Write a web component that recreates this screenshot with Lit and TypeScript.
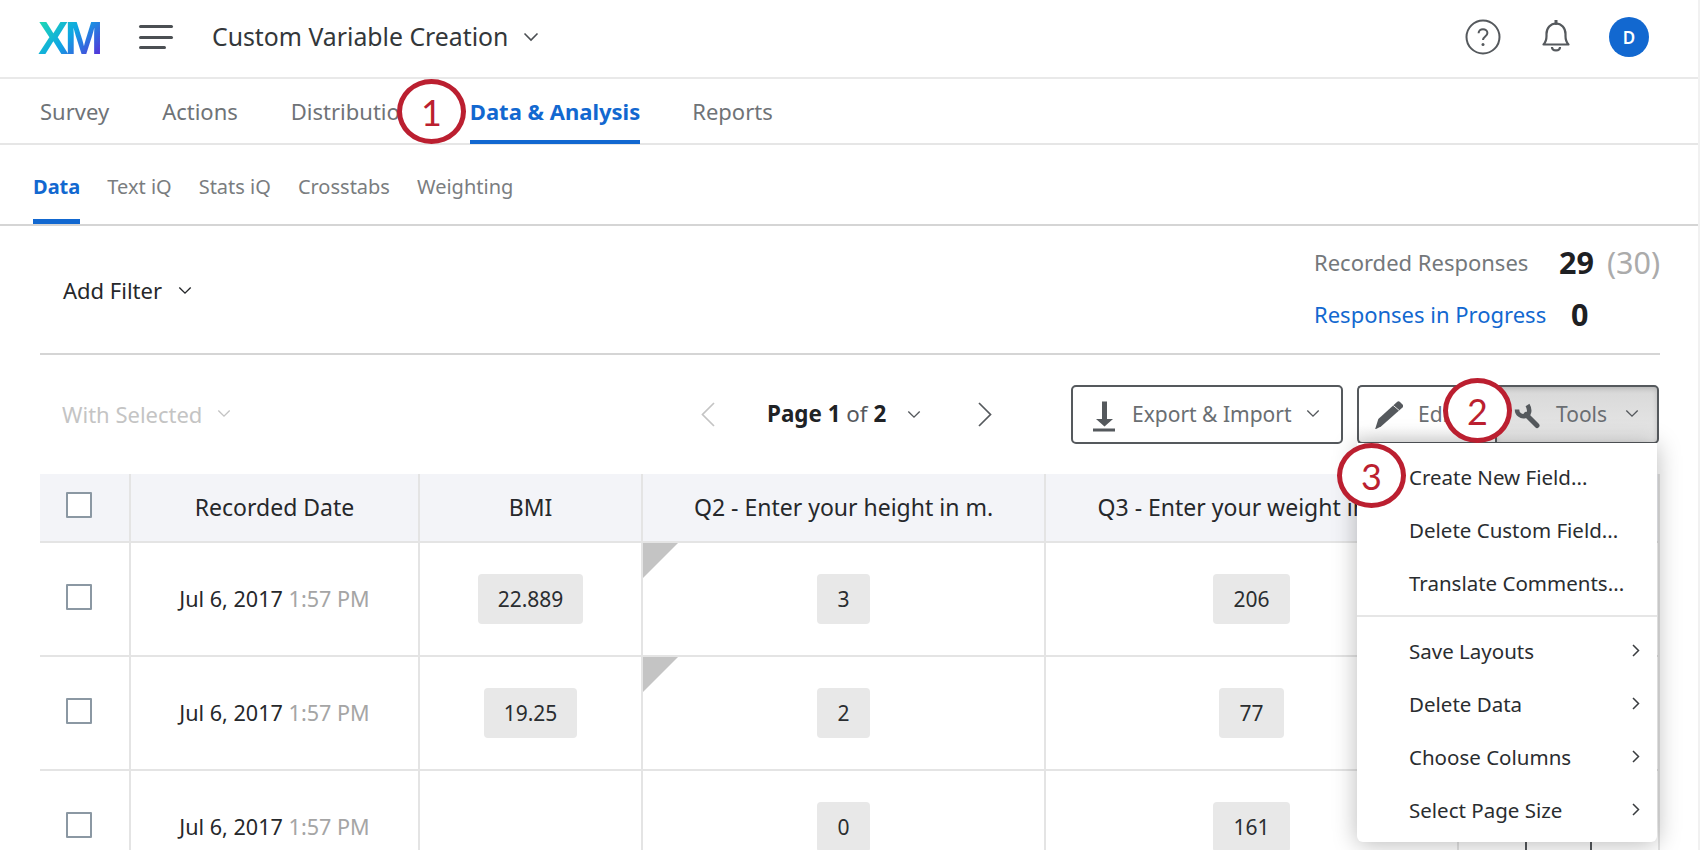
import { LitElement, html, css } from "lit";
import { customElement } from "lit/decorators.js";

const chev = (cls = "chev") => html`<svg class=${cls} viewBox="0 0 16 10"><path d="M1.5 1.5 8 8l6.500-6.500" fill="none" stroke="currentColor" stroke-width="1.600"/></svg>`;

const rows = [
  { time: "1:57 PM", bmi: "22.889", q2: "3", q3: "206", flag: true, last: false },
  { time: "1:57 PM", bmi: "19.25", q2: "2", q3: "77", flag: true, last: false },
  { time: "1:57 PM", bmi: "", q2: "0", q3: "161", flag: false, last: true },
];

const menuTop = ["Create New Field...", "Delete Custom Field...", "Translate Comments..."];
const menuSub = ["Save Layouts", "Delete Data", "Choose Columns", "Select Page Size"];

@customElement("app-root")
export class AppRoot extends LitElement {
  static styles = css`
    :host { display: block; width: 1700px; height: 850px; overflow: hidden; position: relative; background: #fff; font-family: "Noto Sans", "Open Sans", sans-serif; color: #2a2d30; box-sizing: border-box; }
    * { box-sizing: border-box; }
    svg { display: block; flex: none; }
    .header { height: 79px; border-bottom: 2px solid #e9e9e9; display: flex; align-items: center; padding: 0 0 3px 38px; }
    .logo { font: 700 46px/36px "Liberation Sans", sans-serif; letter-spacing: -4px; width: 62px; height: 40px; background: linear-gradient(135deg, #21e0ad 0%, #0ea5e4 50%, #5a2bd8 100%); -webkit-background-clip: text; background-clip: text; color: transparent; padding-top: 3px; white-space: nowrap; }
    .burger { width: 34px; height: 24px; margin-left: 39px; display: flex; flex-direction: column; justify-content: space-between; }
    .burger i { display: block; height: 3px; border-radius: 2px; background: #4b4f53; }
    .burger i:nth-child(3) { width: 27px; }
    .title { font-size: 24.800px; margin: -2px 0 0 39px; color: #33373a; line-height: 32px; white-space: nowrap; }
    .title-chev { width: 16px; height: 10px; margin-left: 15px; color: #4b4f53; }
    .hright { margin-left: auto; display: flex; align-items: center; padding-right: 51px; }
    .help { width: 36px; height: 36px; }
    .bell { width: 30px; height: 34px; margin-left: 40px; }
    .avatar { width: 40px; height: 40px; border-radius: 50%; background: #1268d0; color: #fff; display: flex; align-items: center; justify-content: center; font-size: 17px; font-weight: 600; margin-left: 38px; }
    .tabs { height: 66px; border-bottom: 2px solid #e6e6e6; display: flex; gap: 53px; padding-left: 40px; font-size: 22px; color: #6f7377; }
    .tab { height: 65px; display: flex; align-items: center; padding-top: 2px; border-bottom: 4px solid transparent; white-space: nowrap; }
    .tab.on { color: #1268d0; font-weight: 700; border-bottom-color: #1268d0; margin-right: -1px; }
    .tab.dist { width: 126px; overflow: hidden; }
    .subtabs { height: 81px; border-bottom: 2px solid #d5d5d5; display: flex; gap: 27px; padding-left: 33px; font-size: 20px; color: #7a7d80; }
    .sub { height: 79px; display: flex; align-items: center; padding-top: 9px; border-bottom: 5px solid transparent; }
    .sub.on { color: #1268d0; font-weight: 700; border-bottom-color: #1268d0; }
    .filter { margin: 0 40px; height: 129px; border-bottom: 2px solid #d5d5d5; display: flex; justify-content: space-between; }
    .addf { display: flex; align-items: center; font-size: 22px; color: #26282b; margin-left: 23px; height: 128px; white-space: nowrap; }
    .addf svg { width: 14px; height: 9px; margin-left: 16px; }
    .counts { display: grid; grid-template-columns: 245px 104px; grid-auto-rows: 52px; margin-right: -3px; padding-top: 10px; width: 349px; font-size: 22px; height: 120px; white-space: nowrap; }
    .counts .l { color: #74787b; display: flex; align-items: center; }
    .counts .link { color: #1268d0; }
    .counts .n { display: flex; align-items: center; font-size: 30.500px; font-weight: 700; color: #1e2023; gap: 13px; white-space: nowrap; }
    .counts .n span { font-weight: 400; color: #ababab; }
    .counts .z { padding-left: 12px; }
    .toolbar { margin: 30px 40px; height: 59px; display: flex; align-items: center; }
    .withsel { width: 639px; padding: 0 0 2px 22px; display: flex; align-items: center; color: #c4c4c4; font-size: 22px; white-space: nowrap; }
    .withsel svg { width: 14px; height: 9px; margin-left: 15px; }
    .pager { display: flex; align-items: center; width: 392px; }
    .arrow { width: 14px; height: 25px; }
    .arrow.prev { color: #c4c4c4; margin-left: 22px; }
    .arrow.next { color: #55595d; margin-left: 57px; }
    .page { margin: -3px 0 0 52px; font-size: 22.400px; color: #55595d; white-space: nowrap; }
    .page b { color: #202225; font-weight: 700; }
    .pager .pc { width: 14px; height: 9px; margin-left: 21px; color: #55595d; }
    .btn { height: 59px; border: 2px solid #55595d; border-radius: 5px; display: flex; align-items: center; font-size: 21px; color: #6a6e72; background: #fff; white-space: nowrap; padding-bottom: 2px; }
    .export { width: 272px; padding-left: 19px; gap: 14px; }
    .export .ic { width: 26px; height: 38px; color: #55595d; }
    .btn .bc { width: 14px; height: 9px; color: #55595d; }
    .edit { width: 140px; margin-left: 14px; padding-left: 16px; gap: 15px; border-right: 0; border-radius: 5px 0 0 5px; background: linear-gradient(#fff 70%, #f0f0f0); }
    .edit .ic { width: 28px; height: 30px; color: #55595d; }
    .tools { width: 164px; padding-left: 14px; gap: 15px; border-radius: 0 5px 5px 0; background: linear-gradient(#d8d8d8, #e8e8e8); box-shadow: inset 0 2px 5px rgba(0,0,0,.16); margin-left: -2px; }
    .tools .ic { width: 30px; height: 30px; color: #55595d; }
    .tools .bc { margin-left: 3px; }
    .table { margin-left: 40px; width: 1620px; font-size: 23px; }
    .tr { display: grid; grid-template-columns: 91px 289px 223px 403px 413px 68px 65px 68px; height: 114px; border-bottom: 2px solid #e4e4e4; }
    .tr.head { height: 69px; background: #f3f4f8; border-bottom: 2px solid #e4e4e4; }
    .td { display: flex; align-items: center; justify-content: center; border-right: 2px solid #e4e4e4; position: relative; white-space: nowrap; overflow: hidden; }
    .td.first { justify-content: flex-start; padding-left: 26px; }
    .td.dark { border-right-color: #55595d; }
    .head .td { padding-bottom: 2px; color: #26282b; }
    .box { width: 26px; height: 26px; border: 2px solid #8b98a3; background: #fff; border-radius: 1px; margin-top: -4px; }
    .head .box { margin-top: -4px; }
    .date { font-size: 21.600px; color: #26282b; margin-top: -2px; }
    .date span { color: #a5a5a5; }
    .pill { height: 50px; min-width: 50px; padding: 0 20px; border-radius: 4px; background: #e8e8e8; display: flex; align-items: center; justify-content: center; font-size: 21px; color: #2a2d30; }
    .flag { position: absolute; left: 0; top: 0; width: 0; height: 0; border-top: 35px solid #c4c4c4; border-right: 35px solid transparent; }
    .menu { position: absolute; left: 1357px; top: 443px; width: 300px; height: 399px; background: #fff; border-radius: 0 0 6px 6px; box-shadow: 0 2px 24px rgba(0,0,0,.28); padding-top: 7px; color: #2a2d30; font-size: 20.500px; }
    .mi { height: 53px; padding: 0 17px 0 52px; display: flex; align-items: center; justify-content: space-between; white-space: nowrap; }
    .mi svg { width: 8px; height: 13px; }
    .msep { height: 2px; background: #e6e6e6; margin: 6px 0 7px; }
    .mark { position: absolute; width: 69px; height: 65px; border: 5px solid #bb1f30; border-radius: 50%; background: #fff; display: flex; align-items: center; justify-content: center; color: #bb1f30; font: 36px "Lato", serif; }
    .m1 { left: 397px; top: 79px; }
    .m2 { left: 1443px; top: 378px; }
    .m3 { left: 1337px; top: 443px; }
    .edge { position: absolute; right: 0; top: 0; bottom: 0; width: 2px; background: #f1f1f1; }
  `;

  render() {
    return html`
      <div class="header">
        <div class="logo">XM</div>
        <div class="burger"><i></i><i></i><i></i></div>
        <div class="title">Custom Variable Creation</div>
        ${chev("title-chev")}
        <div class="hright">
          <svg class="help" viewBox="0 0 36 36"><circle cx="18" cy="18" r="16.500" fill="none" stroke="#55595d" stroke-width="2"/><path d="M13.600 14.200c0-2.500 2-4 4.400-4s4.400 1.500 4.400 3.800c0 3.600-4.400 3.400-4.400 7" fill="none" stroke="#55595d" stroke-width="2"/><circle cx="18" cy="25.500" r="1.500" fill="#55595d"/></svg>
          <svg class="bell" viewBox="0 0 30 34"><path d="M2.500 24.500c1.500-1.500 3-3.500 3-8.500v-2c0-6 4-10.500 9.500-10.500s9.500 4.500 9.500 10.500v2c0 5 1.500 7 3 8.500z" fill="none" stroke="#55595d" stroke-width="2.200" stroke-linejoin="round"/><path d="M15 .5v3" fill="none" stroke="#55595d" stroke-width="3" stroke-linecap="round"/><path d="M11 27c0 4.500 8 4.500 8 0" fill="none" stroke="#55595d" stroke-width="2.200"/></svg>
          <div class="avatar">D</div>
        </div>
      </div>
      <div class="tabs">
        <div class="tab">Survey</div>
        <div class="tab">Actions</div>
        <div class="tab dist">Distributions</div>
        <div class="tab on">Data &amp; Analysis</div>
        <div class="tab">Reports</div>
      </div>
      <div class="subtabs">
        <div class="sub on">Data</div>
        <div class="sub">Text iQ</div>
        <div class="sub">Stats iQ</div>
        <div class="sub">Crosstabs</div>
        <div class="sub">Weighting</div>
      </div>
      <div class="filter">
        <div class="addf">Add Filter ${chev()}</div>
        <div class="counts">
          <div class="l">Recorded Responses</div><div class="n">29 <span>(30)</span></div>
          <div class="l link">Responses in Progress</div><div class="n z">0</div>
        </div>
      </div>
      <div class="toolbar">
        <div class="withsel">With Selected ${chev()}</div>
        <div class="pager">
          <svg class="arrow prev" viewBox="0 0 14 25"><path d="M13 1 1.500 12.500 13 24" fill="none" stroke="currentColor" stroke-width="1.700"/></svg>
          <div class="page"><b>Page 1</b> of <b>2</b></div>
          ${chev("pc")}
          <svg class="arrow next" viewBox="0 0 14 25"><path d="M1 1l11.500 11.500L1 24" fill="none" stroke="currentColor" stroke-width="1.700"/></svg>
        </div>
        <div class="btn export">
          <svg class="ic" viewBox="0 0 26 38"><path d="M10 6.500h5V24h6l-8.500 7.500L4 24h6z" fill="currentColor"/><rect x="1" y="33.500" width="22" height="3" fill="currentColor"/></svg>
          Export &amp; Import ${chev("bc")}
        </div>
        <div class="btn edit">
          <svg class="ic" viewBox="0 -2.500 28 30"><path d="M0 28l3.300-10.500L22 .5c1-.9 2-.9 3 0l2.500 2.500c1 1 1 2 0 3L6 25z" fill="currentColor"/><path d="M18.300 4l6 5" stroke="#e8e8e8" stroke-width="1" fill="none"/></svg>
          Edit
        </div>
        <div class="btn tools">
          <svg class="ic" viewBox="0 0 30 30"><path d="M6 10.500C6 15 10 18 14 17c4.500-1 5.500-6 2.500-11" fill="none" stroke="currentColor" stroke-width="4.500"/><path d="M15 15.500 26 26.500" fill="none" stroke="currentColor" stroke-width="5" stroke-linecap="round"/></svg>
          Tools ${chev("bc")}
        </div>
      </div>
      <div class="table">
        <div class="tr head">
          <div class="td first"><div class="box"></div></div>
          <div class="td">Recorded Date</div>
          <div class="td">BMI</div>
          <div class="td">Q2 - Enter your height in m.</div>
          <div class="td">Q3 - Enter your weight in kg.</div>
          <div class="td"></div><div class="td"></div><div class="td"></div>
        </div>
        ${rows.map((r) => html`
          <div class="tr">
            <div class="td first"><div class="box"></div></div>
            <div class="td"><div class="date">Jul 6, 2017 <span>${r.time}</span></div></div>
            <div class="td">${r.bmi ? html`<div class="pill">${r.bmi}</div>` : ""}</div>
            <div class="td">${r.flag ? html`<div class="flag"></div>` : ""}<div class="pill">${r.q2}</div></div>
            <div class="td"><div class="pill">${r.q3}</div></div>
            <div class="td ${r.last ? "dark" : ""}"></div><div class="td ${r.last ? "dark" : ""}"></div><div class="td"></div>
          </div>`)}
      </div>
      <div class="menu">
        ${menuTop.map((m) => html`<div class="mi">${m}</div>`)}
        <div class="msep"></div>
        ${menuSub.map((m) => html`<div class="mi">${m}<svg viewBox="0 0 8 13"><path d="M1 1l5.500 5.500L1 12" fill="none" stroke="#3a3d40" stroke-width="1.500"/></svg></div>`)}
      </div>
      <div class="mark m1">1</div>
      <div class="mark m2">2</div>
      <div class="mark m3">3</div>
      <div class="edge"></div>
    `;
  }
}
